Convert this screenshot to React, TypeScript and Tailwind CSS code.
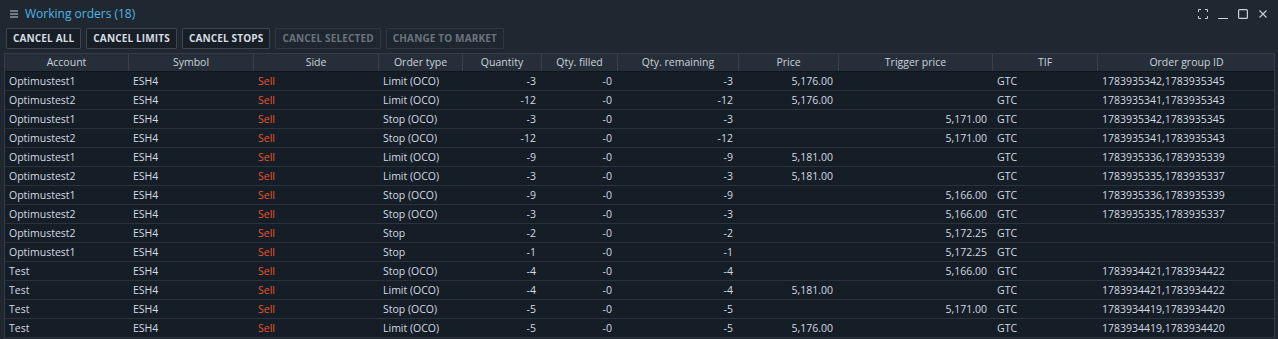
import React from "react";

type Row = string[];

const cols = [
  { name: "Account", w: 124, align: "left" },
  { name: "Symbol", w: 125, align: "left" },
  { name: "Side", w: 125, align: "left" },
  { name: "Order type", w: 84, align: "left" },
  { name: "Quantity", w: 79, align: "right" },
  { name: "Qty. filled", w: 76, align: "right" },
  { name: "Qty. remaining", w: 121, align: "right" },
  { name: "Price", w: 100, align: "right" },
  { name: "Trigger price", w: 154, align: "right" },
  { name: "TIF", w: 105, align: "left" },
  { name: "Order group ID", w: 177, align: "left" },
];

const rows: Row[] = [
  ["Optimustest1", "ESH4", "Sell", "Limit (OCO)", "-3", "-0", "-3", "5,176.00", "", "GTC", "1783935342,1783935345"],
  ["Optimustest2", "ESH4", "Sell", "Limit (OCO)", "-12", "-0", "-12", "5,176.00", "", "GTC", "1783935341,1783935343"],
  ["Optimustest1", "ESH4", "Sell", "Stop (OCO)", "-3", "-0", "-3", "", "5,171.00", "GTC", "1783935342,1783935345"],
  ["Optimustest2", "ESH4", "Sell", "Stop (OCO)", "-12", "-0", "-12", "", "5,171.00", "GTC", "1783935341,1783935343"],
  ["Optimustest1", "ESH4", "Sell", "Limit (OCO)", "-9", "-0", "-9", "5,181.00", "", "GTC", "1783935336,1783935339"],
  ["Optimustest2", "ESH4", "Sell", "Limit (OCO)", "-3", "-0", "-3", "5,181.00", "", "GTC", "1783935335,1783935337"],
  ["Optimustest1", "ESH4", "Sell", "Stop (OCO)", "-9", "-0", "-9", "", "5,166.00", "GTC", "1783935336,1783935339"],
  ["Optimustest2", "ESH4", "Sell", "Stop (OCO)", "-3", "-0", "-3", "", "5,166.00", "GTC", "1783935335,1783935337"],
  ["Optimustest2", "ESH4", "Sell", "Stop", "-2", "-0", "-2", "", "5,172.25", "GTC", ""],
  ["Optimustest1", "ESH4", "Sell", "Stop", "-1", "-0", "-1", "", "5,172.25", "GTC", ""],
  ["Test", "ESH4", "Sell", "Stop (OCO)", "-4", "-0", "-4", "", "5,166.00", "GTC", "1783934421,1783934422"],
  ["Test", "ESH4", "Sell", "Limit (OCO)", "-4", "-0", "-4", "5,181.00", "", "GTC", "1783934421,1783934422"],
  ["Test", "ESH4", "Sell", "Stop (OCO)", "-5", "-0", "-5", "", "5,171.00", "GTC", "1783934419,1783934420"],
  ["Test", "ESH4", "Sell", "Limit (OCO)", "-5", "-0", "-5", "5,176.00", "", "GTC", "1783934419,1783934420"],
];

const gridCols =
  "grid grid-cols-[124px_125px_125px_84px_79px_76px_121px_100px_154px_105px_177px]";

function Btn({ label, disabled }: { label: string; disabled?: boolean }) {
  return (
    <div
      className={
        "h-[21px] flex items-center px-[6px] border rounded-[1px] text-[10px] font-bold tracking-[0.15px] " +
        (disabled
          ? "border-[#2f3842] text-[#6b747d] bg-[#1e262f]"
          : "border-[#3d4751] text-[#d6dce2] bg-[#171e26]")
      }
    >
      {label}
    </div>
  );
}

export default function App() {
  return (
    <div className="w-[1278px] h-[339px] bg-[#1f2730] flex flex-col overflow-hidden font-['Open_Sans',sans-serif] text-[#d4dae0]">
      {/* Title bar */}
      <div className="h-[27px] flex items-center pl-[10px] pr-[10px] shrink-0">
        <svg width="8" height="8" viewBox="0 0 8 8" className="mr-[7px]">
          <rect x="0" y="0.5" width="8" height="1" fill="#c8d0d8" />
          <rect x="0" y="3.5" width="8" height="1" fill="#c8d0d8" />
          <rect x="0" y="6.5" width="8" height="1" fill="#c8d0d8" />
        </svg>
        <span className="text-[12px] text-[#4fb6e6] leading-none">Working orders (18)</span>
        <div className="ml-auto flex items-center gap-[10px]">
          <svg width="10" height="10" viewBox="0 0 10 10" fill="none" stroke="#c8d0d8" strokeWidth="1">
            <path d="M0.5 3V0.5H3M7 0.5H9.5V3M9.5 7V9.5H7M3 9.5H0.5V7" />
          </svg>
          <svg width="10" height="10" viewBox="0 0 10 10" fill="none" stroke="#c8d0d8" strokeWidth="1">
            <path d="M0 9.5H10" />
          </svg>
          <svg width="10" height="10" viewBox="0 0 10 10" fill="none" stroke="#c8d0d8" strokeWidth="1.2">
            <rect x="0.6" y="0.6" width="8.8" height="8.8" rx="1" />
          </svg>
          <svg width="10" height="10" viewBox="0 0 10 10" fill="none" stroke="#c8d0d8" strokeWidth="1.1">
            <path d="M1.5 1.5L8.5 8.5M8.5 1.5L1.5 8.5" />
          </svg>
        </div>
      </div>

      {/* Buttons */}
      <div className="flex gap-[5px] pl-[6px] h-[21px] mt-[1px] shrink-0">
        <Btn label="CANCEL ALL" />
        <Btn label="CANCEL LIMITS" />
        <Btn label="CANCEL STOPS" />
        <Btn label="CANCEL SELECTED" disabled />
        <Btn label="CHANGE TO MARKET" disabled />
      </div>

      {/* Table */}
      <div className="ml-[4px] mt-[4px] w-[1271px] border-l border-r border-t border-[#343d47] bg-[#151d27] text-[10.5px]">
        <div className={gridCols + " h-[18px] bg-[#262f39] border-b border-[#0f151c]"}>
          {cols.map((c, i) => (
            <div
              key={c.name}
              className={
                "flex items-center justify-center leading-none text-[#ccd3da] " +
                (i < cols.length - 1 ? "border-r border-[#38424c]" : "")
              }
            >
              {c.name}
            </div>
          ))}
        </div>
        {rows.map((r, ri) => (
          <div key={ri} className={gridCols + " h-[19px] border-b border-[#2a333d]"}>
            {r.map((v, ci) => (
              <div
                key={ci}
                className={
                  "flex items-center leading-none whitespace-nowrap " +
                  (cols[ci].align === "right" ? "justify-end pr-[6px]" : "justify-start pl-[4px]") +
                  (ci === 2 ? " text-[#ec5429]" : "")
                }
              >
                {v}
              </div>
            ))}
          </div>
        ))}
      </div>
    </div>
  );
}
